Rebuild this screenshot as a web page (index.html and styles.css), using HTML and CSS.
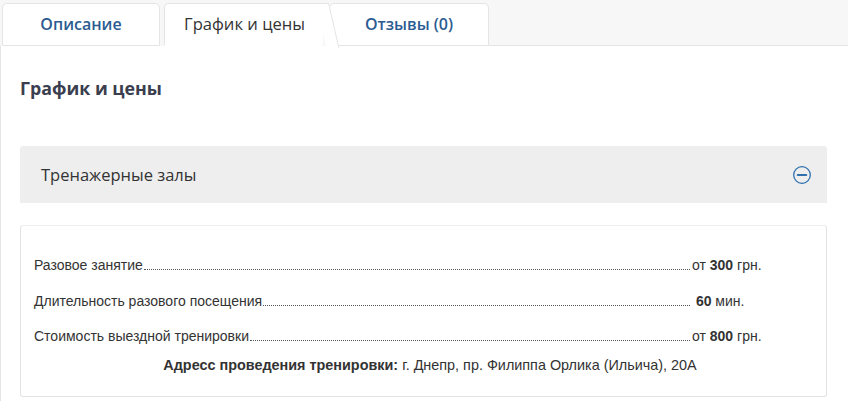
FILE: index.html
```
<!DOCTYPE html>
<html lang="ru">
<head>
<meta charset="utf-8">
<title>График и цены</title>
<link rel="stylesheet" href="styles.css">
</head>
<body>
<div class="page">
  <div class="tabs">
    <div class="tab">Описание</div>
    <div class="tab tab-active">График и цены</div>
    <div class="tab tab-last">Отзывы (0)</div>
    <div class="tabs-rest"></div>
  </div>
  <div class="panel">
    <h2 class="title">График и цены</h2>
    <div class="acc-head">
      <span class="acc-title">Тренажерные залы</span>
      <svg class="acc-icon" width="20" height="20" viewBox="0 0 20 20">
        <circle cx="10" cy="10" r="8.3" fill="none" stroke="#2f6fae" stroke-width="1.3"/>
        <line x1="5.8" y1="10" x2="14.2" y2="10" stroke="#2f6fae" stroke-width="2.2" stroke-linecap="round"/>
      </svg>
    </div>
    <div class="card">
      <div class="row">
        <span class="label">Разовое занятие</span>
        <span class="dots"></span>
        <span class="value">от <b>300</b> грн.</span>
      </div>
      <div class="row">
        <span class="label">Длительность разового посещения</span>
        <span class="dots"></span>
        <span class="value">&nbsp;<b>60</b> мин.</span>
      </div>
      <div class="row">
        <span class="label">Стоимость выездной тренировки</span>
        <span class="dots"></span>
        <span class="value">от <b>800</b> грн.</span>
      </div>
      <div class="address"><b>Адресс проведения тренировки:</b> г. Днепр, пр. Филиппа Орлика (Ильича), 20A</div>
    </div>
  </div>
</div>
</body>
</html>
```
FILE: styles.css
```
html, body {
  margin: 0;
  padding: 0;
  background: #ffffff;
}
.page {
  width: 848px;
  height: 401px;
  overflow: hidden;
  font-family: "Liberation Sans", Arial, sans-serif;
}
.tabs {
  display: flex;
  align-items: flex-end;
  height: 46px;
  background: #f7f7f7;
  box-sizing: border-box;
}
.tab {
  position: relative;
  box-sizing: border-box;
  height: 43px;
  width: 158px;
  margin-left: 2px;
  background: #fff;
  border: 1px solid #e4e4e4;
  border-radius: 5px 5px 0 0;
  font-family: "Open Sans", sans-serif;
  font-weight: 600;
  font-size: 16px;
  color: #2b5b91;
  display: flex;
  align-items: center;
  justify-content: center;
  padding-bottom: 2px;
}
.tab-active {
  width: 159px;
  margin-left: 4px;
  border-right: none;
  border-bottom: 1px solid #fff;
  border-top-right-radius: 0;
  font-weight: 400;
  font-size: 16.6px;
  color: #333;
  z-index: 2;
  justify-content: flex-start;
  padding-left: 19px;
}
.tab-active::after {
  content: "";
  position: absolute;
  top: -1px;
  right: -6px;
  width: 12px;
  height: 44px;
  background: #fff;
  border-top: 1px solid #e4e4e4;
  border-right: 1px solid #e4e4e4;
  transform: skewX(13deg);
  transform-origin: top left;
}
.tab-last {
  width: 160px;
  margin-left: 6px;
  z-index: 1;
}
.tabs-rest {
  flex: 1;
  height: 1px;
  background: #e4e4e4;
}
.panel {
  box-sizing: border-box;
  height: 355px;
  border-left: 1px solid #e4e4e4;
  padding: 0 21px 0 19px;
  background: #fff;
}
.title {
  margin: 0;
  padding-top: 30px;
  height: 70px;
  box-sizing: border-box;
  font-family: "Open Sans", sans-serif;
  font-weight: 700;
  font-size: 17.8px;
  line-height: 24px;
  color: #3a3e4e;
}
.acc-head {
  margin-top: 30px;
  height: 57px;
  background: #eeeeee;
  border-radius: 3px 3px 0 0;
  display: flex;
  align-items: center;
  justify-content: space-between;
  padding: 0 15px 0 21px;
}
.acc-title {
  font-family: "Open Sans", sans-serif;
  font-size: 16.5px;
  color: #333;
}
.acc-icon {
  display: block;
}
.card {
  margin-top: 22px;
  height: 172px;
  box-sizing: border-box;
  border: 1px solid #e3e3e3;
  border-top-color: #eee;
  border-radius: 3px;
  padding: 22px 14px 0 13px;
  font-size: 14px;
  color: #333;
}
.row {
  display: flex;
  align-items: baseline;
  height: 35.5px;
  line-height: 35px;
}
.label {
  white-space: nowrap;
}
.dots {
  flex: 1;
  border-bottom: 1px dotted #555;
  margin-left: 1px;
}
.value {
  width: 120px;
  padding-left: 2px;
  white-space: pre;
}
.value b {
  font-weight: 700;
}
.address {
  text-align: center;
  line-height: 20px;
  padding-left: 14px;
  font-size: 14.4px;
}
.address b {
  font-weight: 700;
}
```
